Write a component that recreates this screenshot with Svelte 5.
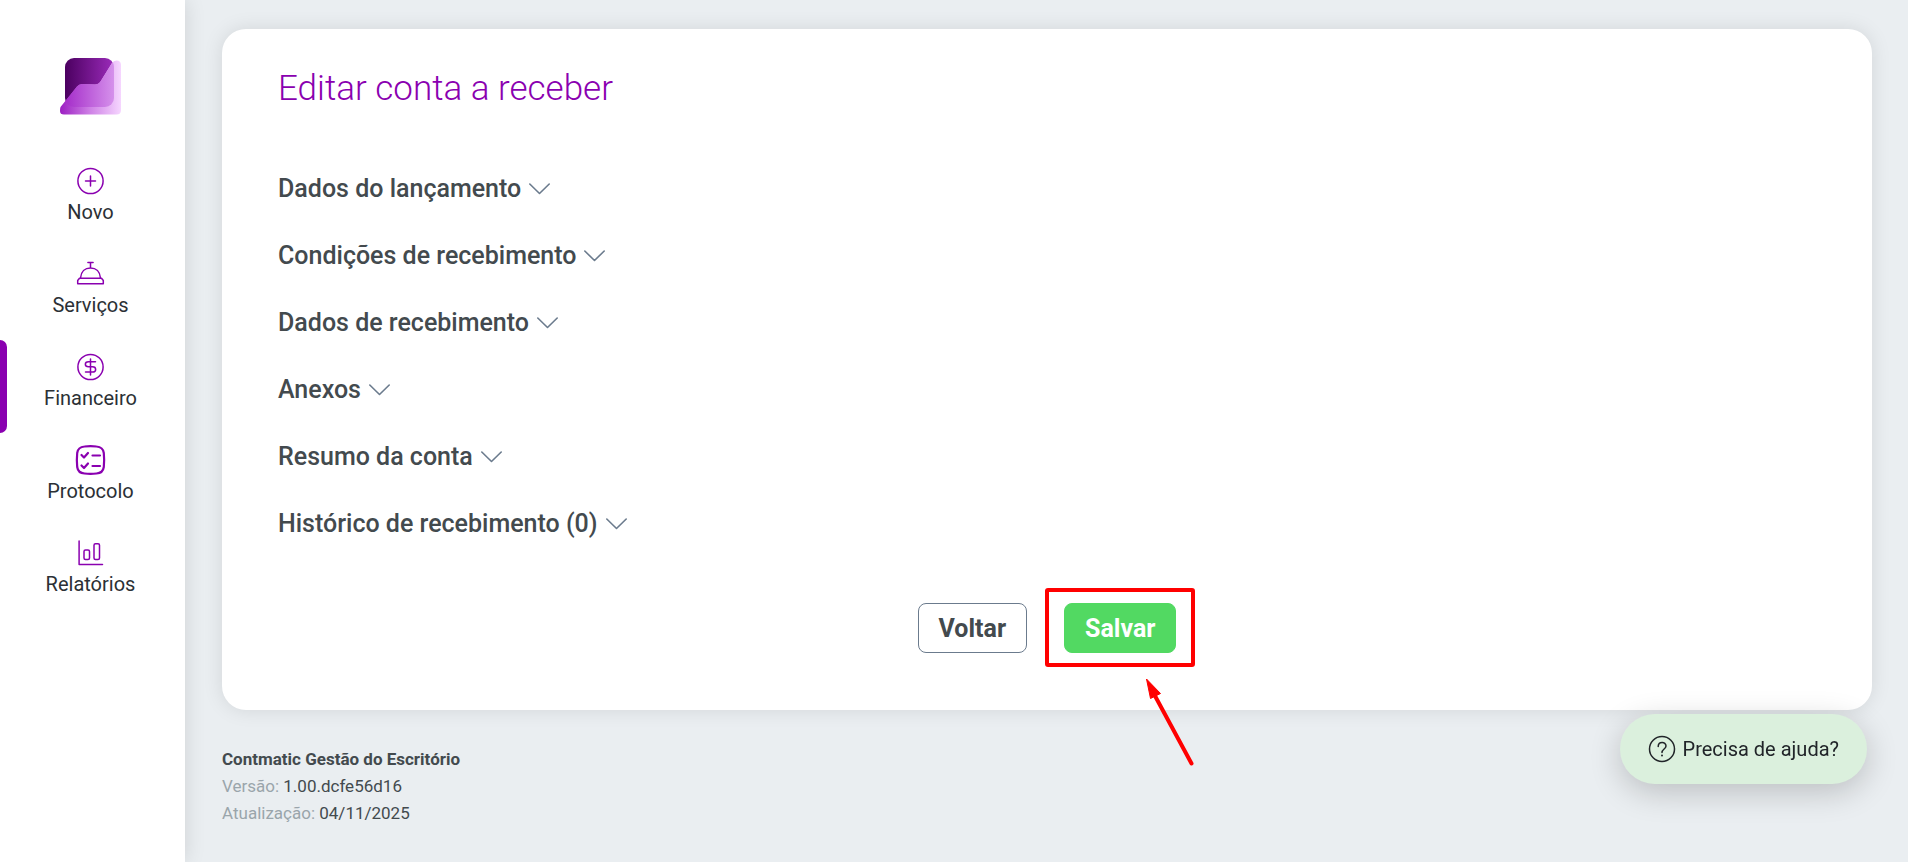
<script lang="ts">
  const nav = [
    { label: 'Novo', icon: 'plus' },
    { label: 'Serviços', icon: 'bell' },
    { label: 'Financeiro', icon: 'dollar', active: true },
    { label: 'Protocolo', icon: 'list' },
    { label: 'Relatórios', icon: 'chart' }
  ];

  const sections = [
    'Dados do lançamento',
    'Condições de recebimento',
    'Dados de recebimento',
    'Anexos',
    'Resumo da conta',
    'Histórico de recebimento (0)'
  ];
</script>

<div class="shell">
  <aside class="sidebar">
    <a class="logo" href="#inicio" aria-label="Início">
      <svg width="61" height="58" viewBox="1 0 61 58">
        <defs>
          <linearGradient id="dark" x1="0" x2="1">
            <stop offset="0" stop-color="#4b0060" />
            <stop offset="1" stop-color="#9b2bba" />
          </linearGradient>
          <linearGradient id="light" x1="0" x2="1">
            <stop offset="0" stop-color="#9c1fc2" />
            <stop offset="0.5" stop-color="#cf82e6" />
            <stop offset="1" stop-color="#f6d6ff" />
          </linearGradient>
          <linearGradient id="mid" x1="0" x2="1">
            <stop offset="0" stop-color="#a023c6" />
            <stop offset="1" stop-color="#dc9ff0" />
          </linearGradient>
          <clipPath id="tile"><rect x="6" y="1" width="49" height="49" rx="9" /></clipPath>
        </defs>
        <rect x="6" y="1" width="49" height="49" rx="9" fill="url(#dark)" />
        <path d="M1.500 50 L18 29.500 Q20 27 23 27 L36 27.500 Q39.500 27.500 41.500 24.500 L53 6 Q54.500 3.500 57.500 3.500 Q62 3.500 62 8 V53 Q62 57.500 57.500 57.500 H5 Q1 57.500 1 54 Q1 51.500 1.500 50 Z" fill="url(#light)" />
        <path clip-path="url(#tile)" d="M1.500 50 L18 29.500 Q20 27 23 27 L36 27.500 Q39.500 27.500 41.500 24.500 L53 6 Q54.500 3.500 57.500 3.500 H62 V57.500 H1 Z" fill="url(#mid)" />
      </svg>
    </a>
    <nav>
      {#each nav as item}
        <a class="nav-item" class:active={item.active} href="#{item.icon}">
          <svg class="nav-icon" width="31" height="32" viewBox="-15.500 -16 31 32">
            {#if item.icon === 'plus'}
              <circle r="12.600" />
              <path d="M-5 0H5M0 -5V5" />
            {:else if item.icon === 'bell'}
              <path d="M-2.600 -11.400H2.600M0 -11.400V-6.500M-10 4C-9.500 -2.500 -5.500 -6 0 -6S9.500 -2.500 10 4M-11 4.200H11L12.800 6.500V9.800H-12.800V6.500Z" />
            {:else if item.icon === 'dollar'}
              <circle r="12.600" />
              <path d="M0 -8V8M5 -5.300H-2C-6.200 -5.300 -6.200 -0.200 -2 -0.200H2C6.200 -0.200 6.200 5 2 5H-5" />
            {:else if item.icon === 'list'}
              <path class="bold" d="M-6 -13.500Q0 -14.300 6 -13.500Q12.500 -13 13.300 -7Q14 0 13.300 7Q12.500 13 6 13.500Q0 14.300 -6 13.500Q-12.500 13 -13.300 7Q-14 0 -13.300 -7Q-12.500 -13 -6 -13.500Z" />
              <path class="bold" d="M-9 -5L-6.500 -2.500L-2.500 -7M-9 5.500L-6.500 8L-2.500 3.500M2 -4.500H9.500M2 6H9.500" />
            {:else}
              <path d="M-11.400 -12V11.500H12" />
              <rect x="-6.500" y="-3" width="5.500" height="9.500" rx="1.500" />
              <rect x="3.500" y="-9.200" width="5.500" height="15.700" rx="1.500" />
            {/if}
          </svg>
          <span>{item.label}</span>
        </a>
      {/each}
    </nav>
  </aside>

  <div class="page">
    <main class="card">
      <h1>Editar conta a receber</h1>
      <div class="sections">
        {#each sections as name}
          <h2>
            <button class="section" type="button" aria-expanded="false">
              {name}
              <svg width="21" height="12" viewBox="0 0 21 12" aria-hidden="true">
                <path d="M0.800 1L10.500 10.500L20.200 1" />
              </svg>
            </button>
          </h2>
        {/each}
      </div>
      <div class="actions">
        <button class="btn back" type="button">Voltar</button>
        <div class="save-wrap">
          <button class="btn save" type="button">Salvar</button>
          <span class="highlight"></span>
          <svg class="arrow" width="52" height="92" viewBox="0 0 52 92" aria-hidden="true">
            <path d="M10 17L47.500 86.500" />
            <polygon points="2.500,2 16.500,16.500 6.500,21.500" />
          </svg>
        </div>
      </div>
    </main>

    <footer>
      <strong>Contmatic Gestão do Escritório</strong>
      <div><span>Versão:</span> 1.00.dcfe56d16</div>
      <div><span>Atualização:</span> 04/11/2025</div>
    </footer>
  </div>

  <button class="help" type="button">
    <svg width="28" height="28" viewBox="-14 -14 28 28" aria-hidden="true">
      <circle r="12.500" />
      <path d="M-3.800 -2.500C-3.800 -7.800 4 -7.800 4 -3C4 0 0 0 0 3.500" />
      <circle class="dot" cy="6.500" r="1" />
    </svg>
    Precisa de ajuda?
  </button>
</div>

<style>
  :global(body) {
    margin: 0;
    background: #eaeef1;
  }
  .shell {
    display: flex;
    min-height: 100vh;
    font-family: Roboto, "Liberation Sans", sans-serif;
    color: #434a4e;
  }
  button {
    font-family: inherit;
    cursor: pointer;
  }
  .sidebar {
    flex: none;
    width: 181px;
    padding-right: 4px;
    background: #fff;
    box-shadow: 0 0 20px rgba(0, 0, 0, 0.12);
  }
  .logo {
    display: flex;
    justify-content: center;
    padding-top: 57px;
  }
  nav {
    padding-top: 39px;
  }
  .nav-item {
    position: relative;
    display: flex;
    flex-direction: column;
    align-items: center;
    box-sizing: border-box;
    height: 93px;
    padding-top: 11px;
    font-size: 20px;
    line-height: 30px;
    color: #2b3035;
    text-decoration: none;
  }
  .nav-item.active::before {
    content: "";
    position: absolute;
    left: 0;
    top: 0;
    width: 7px;
    height: 93px;
    background: #8a00b0;
    border-radius: 0 8px 8px 0;
  }
  .nav-icon {
    fill: none;
    stroke: #8a00b0;
    stroke-width: 1.5;
    stroke-linecap: round;
    stroke-linejoin: round;
  }
  .nav-icon .bold {
    stroke-width: 2.2;
  }
  .page {
    flex: 1;
    min-width: 0;
    padding: 29px 36px 24px 37px;
  }
  .card {
    padding: 37px 56px 57px;
    background: #fff;
    border-radius: 24px;
    box-shadow: 0 0 20px rgba(0, 0, 0, 0.1);
  }
  h1 {
    margin: 0;
    font-size: 35px;
    font-weight: 300;
    line-height: 46px;
    color: #8a00b0;
  }
  .sections {
    display: flex;
    flex-direction: column;
    gap: 37px;
    margin-top: 62px;
  }
  h2 {
    margin: 0;
    font-size: 25px;
    line-height: 30px;
  }
  .section {
    display: flex;
    align-items: center;
    gap: 8px;
    padding: 0;
    border: 0;
    background: none;
    font-size: 25px;
    font-weight: 500;
    line-height: 30px;
    color: #434a4e;
  }
  .section svg {
    fill: none;
    stroke: #6b7b8d;
    stroke-width: 1.6;
    stroke-linecap: round;
    stroke-linejoin: round;
  }
  .actions {
    display: flex;
    justify-content: center;
    gap: 37px;
    margin-top: 64px;
  }
  .btn {
    height: 50px;
    padding: 0 20px;
    border: 1px solid #6b7b8d;
    border-radius: 8px;
    background: #fff;
    font-size: 25px;
    font-weight: 700;
    color: #434a4e;
  }
  .btn.save {
    border-color: #52d962;
    background: #52d962;
    color: #fff;
  }
  .save-wrap {
    position: relative;
  }
  .highlight {
    position: absolute;
    inset: -15px -19px -14px;
    border: 4px solid #f00;
    border-radius: 3px;
    pointer-events: none;
  }
  .arrow {
    position: absolute;
    left: 80px;
    top: 74px;
    pointer-events: none;
  }
  .arrow path {
    stroke: #f00;
    stroke-width: 4;
    stroke-linecap: round;
  }
  .arrow polygon {
    fill: #f00;
    stroke: #f00;
    stroke-linejoin: round;
  }
  footer {
    margin-top: 36px;
    font-size: 17px;
    line-height: 27px;
  }
  footer span {
    color: #9aa5ab;
  }
  .help {
    position: fixed;
    right: 41px;
    bottom: 78px;
    display: flex;
    align-items: center;
    gap: 7px;
    height: 70px;
    padding: 0 28px;
    border: 0;
    border-radius: 35px;
    background: #dbf0dd;
    box-shadow: 0 8px 32px rgba(0, 0, 0, 0.2);
    font-size: 20px;
    color: #212529;
  }
  .help svg {
    fill: none;
    stroke: #212529;
    stroke-width: 1.5;
    stroke-linecap: round;
  }
  .help .dot {
    fill: #212529;
    stroke: none;
  }
</style>
